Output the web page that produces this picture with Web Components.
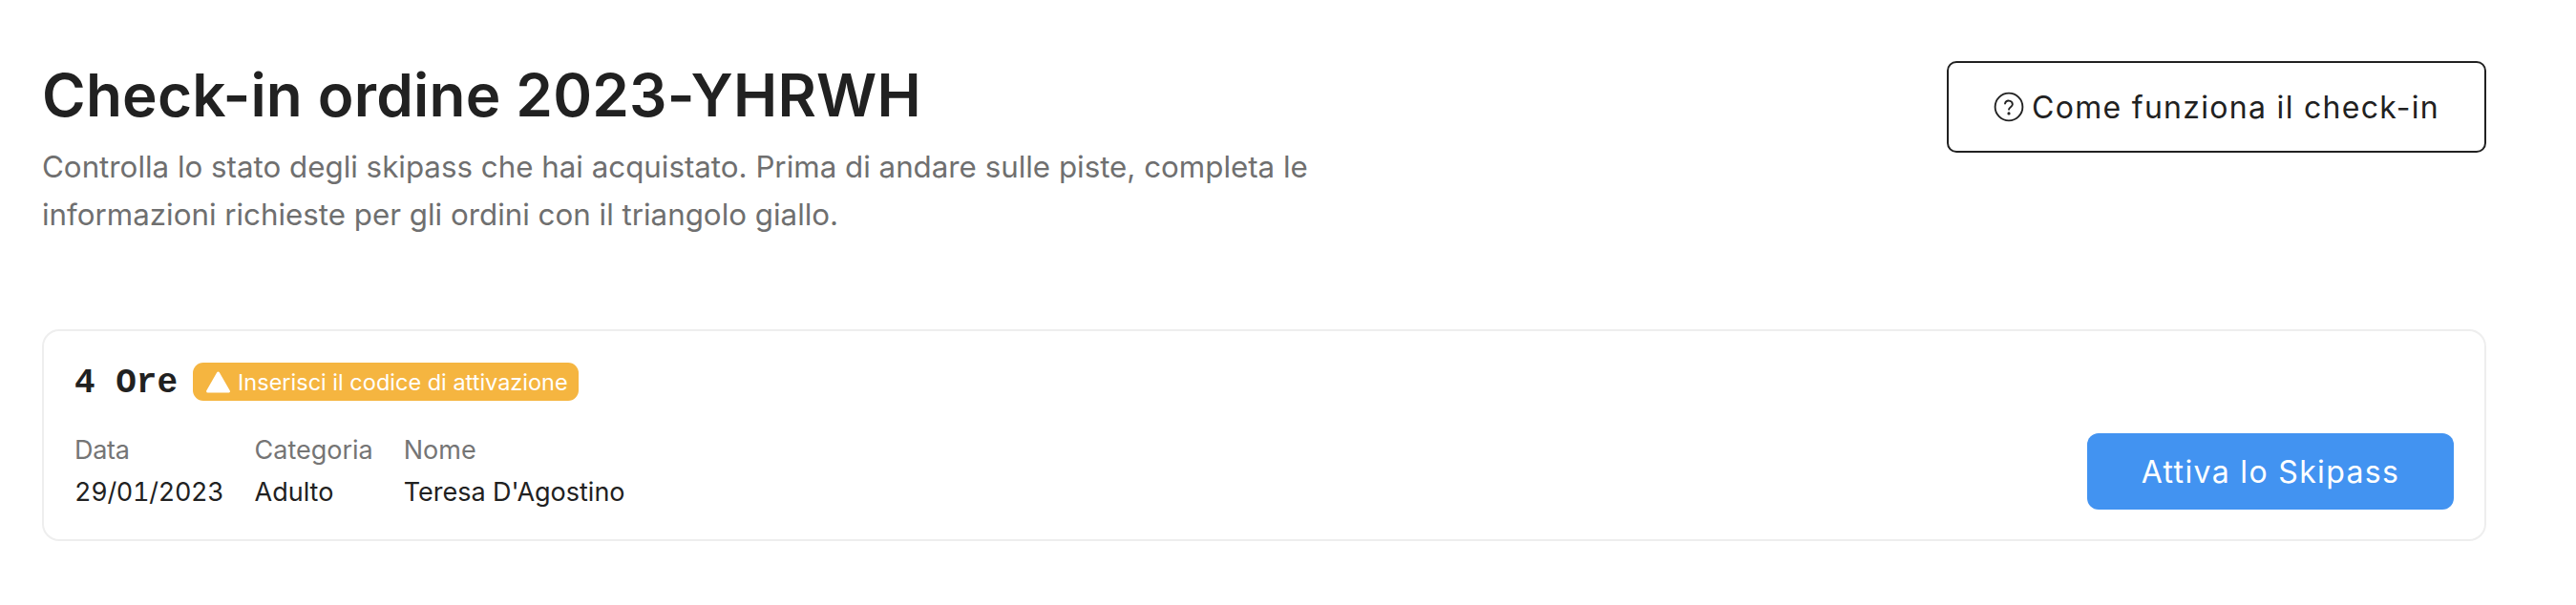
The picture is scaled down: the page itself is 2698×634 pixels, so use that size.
<!DOCTYPE html>
<html><head><meta charset="utf-8"><style>
html,body{margin:0;padding:0;background:#fff}
body{font-family:Inter,"Noto Sans",sans-serif;width:2698px;height:634px;overflow:hidden}
</style></head><body>
<template id="t-page"><style>
:host{display:block;padding:64px 94px 0 44px;box-sizing:border-box;width:2698px}
header{display:flex;justify-content:space-between;align-items:flex-start}
.intro{width:1400px}
h1{margin:0;font:600 62px/72px Inter,sans-serif;color:#212121;letter-spacing:.2px}
p{margin:15px 0 0;font:400 31.3px/49.5px Inter,sans-serif;color:#6f6f6f}
.list{margin-top:95px}
</style><header><div class="intro"><h1><slot name="title"></slot></h1><p><slot name="desc"></slot></p></div><slot name="action"></slot></header><div class="list"><slot></slot></div></template>
<template id="t-help"><style>
:host{display:flex;align-items:center;justify-content:center;gap:8px;width:565px;height:96px;box-sizing:border-box;border:2px solid #212121;border-radius:10px;font:400 32px Inter,sans-serif;color:#212121;letter-spacing:1.3px}
svg{width:32px;height:32px;flex:none}
</style><svg viewBox="0 0 24 24" fill="none" stroke="#212121" stroke-width="1.4" stroke-linecap="round"><circle cx="12" cy="12" r="10.8"/><path d="M9 9.4a3 3 0 0 1 5.9.6c0 2-2.9 2.2-2.9 4"/><circle cx="12" cy="17.2" r=".5" fill="#212121"/></svg><slot></slot></template>
<template id="t-card"><style>
:host{display:flex;justify-content:space-between;align-items:flex-end;box-sizing:border-box;height:222px;border:2px solid #eee;border-radius:18px;padding:33px 32px 31px}
.left{align-self:flex-start}
.t{display:flex;align-items:flex-start;gap:16px;margin-bottom:30px}
.name{font:700 36px/36px "Liberation Mono",monospace;color:#212121;padding-top:4px}
.fields{display:flex;gap:32px}
</style><div class="left"><div class="t"><span class="name"><slot name="name"></slot></span><slot name="badge"></slot></div><div class="fields"><slot name="field"></slot></div></div><slot name="action"></slot></template>
<template id="t-badge"><style>
:host{display:flex;align-items:center;gap:8px;height:40px;padding:0 11px 0 14px;background:#f5b540;border-radius:11px;color:#fff;font:400 23.5px Inter,sans-serif}
svg{width:25px;height:23px;flex:none}
</style><svg viewBox="0 0 25 23"><path d="M12.5 2 L23.4 21 H1.6 Z" fill="#fff" stroke="#fff" stroke-width="3" stroke-linejoin="round"/></svg><slot></slot></template>
<template id="t-field"><style>
:host{display:block;font:400 27px/43.5px Inter,sans-serif;font-variant-numeric:tabular-nums}
.l{color:#757575}.v{color:#212121}
</style><div class="l"><slot name="label"></slot></div><div class="v"><slot></slot></div></template>
<template id="t-btn"><style>
:host{display:flex;align-items:center;justify-content:center;width:384px;height:80px;background:#4293f1;border-radius:12px;color:#fff;font:400 32px Inter,sans-serif;letter-spacing:1.35px}
</style><slot></slot></template>
<script>
for (const [n,t] of [['checkin-page','t-page'],['help-button','t-help'],['pass-card','t-card'],['warn-badge','t-badge'],['info-field','t-field'],['action-button','t-btn']]) {
  customElements.define(n, class extends HTMLElement { constructor(){super();this.attachShadow({mode:'open'}).append(document.getElementById(t).content.cloneNode(true));} });
}
</script>
<checkin-page>
<span slot="title">Check-in ordine 2023-YHRWH</span>
<span slot="desc">Controlla lo stato degli skipass che hai acquistato. Prima di andare sulle piste, completa le informazioni richieste per gli ordini con il triangolo giallo.</span>
<help-button slot="action">Come funziona il check-in</help-button>
<pass-card>
<span slot="name">4 Ore</span>
<warn-badge slot="badge">Inserisci il codice di attivazione</warn-badge>
<info-field slot="field" style="letter-spacing:-.3px"><span slot="label">Data</span>29/01/2023</info-field>
<info-field slot="field"><span slot="label">Categoria</span>Adulto</info-field>
<info-field slot="field"><span slot="label">Nome</span>Teresa D'Agostino</info-field>
<action-button slot="action">Attiva lo Skipass</action-button>
</pass-card>
</checkin-page>
</body></html>
